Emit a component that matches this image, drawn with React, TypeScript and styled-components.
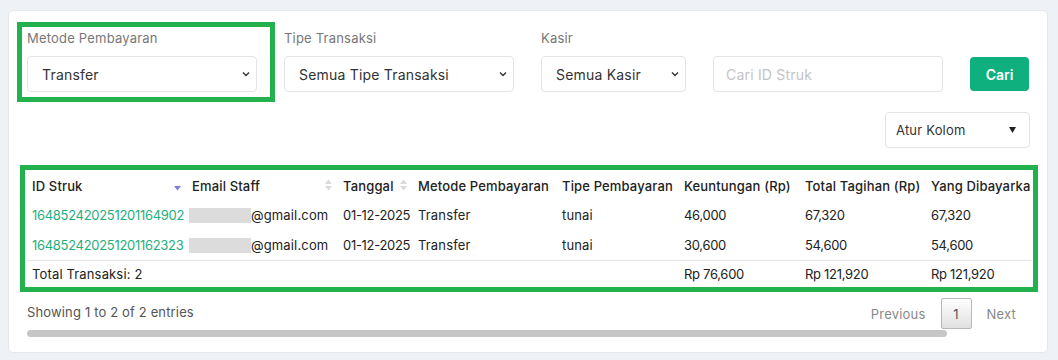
import React from "react";
import styled, { createGlobalStyle, css } from "styled-components";

const Global = createGlobalStyle`
  html, body { margin: 0; padding: 0; background: #eef1f5; }
  body { font-family: "Inter", "Noto Sans", sans-serif; color: #212529; }
  * { box-sizing: border-box; }
`;

const Page = styled.div`
  padding: 10px 10px 7px 8px;
  width: 1058px;
  height: 360px;
`;

const Card = styled.div`
  background: #fff;
  border: 1px solid #e4e7eb;
  border-radius: 5px;
  width: 1040px;
  height: 343px;
  padding: 17px 17px 0 18px;
  display: flex;
  flex-direction: column;
`;

const Highlight = css<{ $box?: [number, number, number, number] }>`
  position: relative;
  &::after {
    content: "";
    position: absolute;
    top: ${(p) => (p.$box ? p.$box[0] : 0)}px;
    right: ${(p) => (p.$box ? p.$box[1] : 0)}px;
    bottom: ${(p) => (p.$box ? p.$box[2] : 0)}px;
    left: ${(p) => (p.$box ? p.$box[3] : 0)}px;
    border: 5px solid #22b14c;
    pointer-events: none;
  }
`;

const FilterRow = styled.div`
  display: flex;
  align-items: flex-end;
  gap: 27px;
`;

const Field = styled.div<{ $w: number; $box?: [number, number, number, number] }>`
  width: ${(p) => p.$w}px;
  display: flex;
  flex-direction: column;
  ${(p) => (p.$box ? Highlight : "")}
`;

const Label = styled.div`
  font-size: 13px;
  line-height: 20px;
  color: #777;
  margin-bottom: 8px;
  letter-spacing: 0.2px;
`;

const SelectBox = styled.div`
  height: 36px;
  border: 1px solid #e2e4e8;
  border-radius: 4px;
  background: #fff;
  display: flex;
  align-items: center;
  justify-content: space-between;
  padding: 0 6px 0 14px;
  font-size: 14px;
  color: #333;
  letter-spacing: 0.2px;
`;

const SearchBox = styled.div`
  width: 230px;
  height: 36px;
  border: 1px solid #e2e4e8;
  border-radius: 4px;
  display: flex;
  align-items: center;
  padding: 0 12px;
  font-size: 14px;
  color: #c4c4c4;
  letter-spacing: 0.2px;
`;

const Button = styled.div`
  width: 59px;
  height: 34px;
  margin-bottom: 1px;
  border-radius: 4px;
  background: #0fb07e;
  color: #fff;
  font-size: 14px;
  font-weight: 600;
  display: flex;
  align-items: center;
  justify-content: center;
`;

const ToolRow = styled.div`
  display: flex;
  justify-content: flex-end;
  margin-top: 20px;
`;

const ColumnSelect = styled(SelectBox)`
  width: 145px;
  padding: 0 13px 0 10px;
  font-size: 13px;
`;

const TableWrap = styled.div<{ $box?: [number, number, number, number] }>`
  margin-top: 22px;
  width: 1004px;
  ${Highlight}
`;

const Scroller = styled.div`
  overflow: hidden;
  width: 1004px;
`;

const Table = styled.table`
  border-collapse: collapse;
  table-layout: fixed;
  width: 1080px;
  font-size: 13px;
  letter-spacing: 0.15px;
`;

const Th = styled.th<{ $w: number }>`
  position: relative;
  width: ${(p) => p.$w}px;
  text-align: left;
  font-weight: 500;
  height: 30px;
  padding: 2px 5px 0;
  white-space: nowrap;
  overflow: hidden;
  color: #222;
`;

const Td = styled.td<{ $link?: boolean; $num?: boolean }>`
  height: 30px;
  padding: 0 5px;
  white-space: nowrap;
  overflow: hidden;
  color: ${(p) => (p.$link ? "#1fae7e" : "#222")};
  letter-spacing: ${(p) => (p.$num ? "-0.3px" : "0.15px")};
`;

const TotalRow = styled.tr`
  border-top: 1px solid #e2e2e2;
  td { height: 28px; padding-top: 0; }
`;

const SortIcon = styled.span`
  position: absolute;
  right: 6px;
  top: 9px;
  display: flex;
`;

const Redacted = styled.span`
  display: inline-block;
  width: 62px;
  height: 15px;
  background: #dcdcdc;
  vertical-align: -3px;
  margin-left: -3px;
`;

const Footer = styled.div`
  margin-top: 10px;
  display: flex;
  align-items: center;
  justify-content: space-between;
  height: 31px;
`;

const Info = styled.div`
  font-size: 13px;
  color: #555;
  letter-spacing: 0.15px;
  margin-top: -4px;
`;

const Pager = styled.div`
  display: flex;
  align-items: center;
  gap: 15px;
  margin-right: 14px;
  font-size: 13px;
  color: #888;
  letter-spacing: 0.2px;
`;

const PageNum = styled.div`
  width: 31px;
  height: 31px;
  border: 1px solid #b9b9b9;
  border-radius: 2px;
  background: linear-gradient(#fff, #e0e0e0);
  color: #555;
  display: flex;
  align-items: center;
  justify-content: center;
`;

const ScrollThumb = styled.div`
  width: 920px;
  height: 7px;
  margin-top: 1px;
  border-radius: 4px;
  background: #c6c6c6;
`;

const Chevron = () => (
  <svg width="8" height="6" viewBox="0 0 8 6">
    <path d="M1 1.5 L4 4.5 L7 1.5" fill="none" stroke="#333" strokeWidth="1.4" />
  </svg>
);

const Caret = () => (
  <svg width="7" height="6" viewBox="0 0 7 6">
    <path d="M0 0 H7 L3.5 6 Z" fill="#222" />
  </svg>
);

const Sort = ({ active }: { active?: boolean }) => (
  <SortIcon>
    {active ? (
      <svg width="7" height="12" viewBox="0 0 7 12">
        <path d="M0 7 H7 L3.5 11.5 Z" fill="#7a80e0" />
      </svg>
    ) : (
      <svg width="7" height="12" viewBox="0 0 7 12">
        <path d="M0 5 H7 L3.5 0.5 Z" fill="#dadada" />
        <path d="M0 7 H7 L3.5 11.5 Z" fill="#dadada" />
      </svg>
    )}
  </SortIcon>
);

const cols: { t: string; w: number; sort?: "on" | "off" }[] = [
  { t: "ID Struk", w: 160, sort: "on" },
  { t: "Email Staff", w: 151, sort: "off" },
  { t: "Tanggal", w: 75, sort: "off" },
  { t: "Metode Pembayaran", w: 144 },
  { t: "Tipe Pembayaran", w: 122 },
  { t: "Keuntungan (Rp)", w: 121 },
  { t: "Total Tagihan (Rp)", w: 126 },
  { t: "Yang Dibayarkan (Rp)", w: 181 },
];

const rows = [
  ["164852420251201164902", "01-12-2025", "Transfer", "tunai", "46,000", "67,320", "67,320"],
  ["164852420251201162323", "01-12-2025", "Transfer", "tunai", "30,600", "54,600", "54,600"],
];

export default function App() {
  return (
    <>
      <Global />
      <Page>
        <Card>
          <FilterRow>
            <Field $w={230} $box={[-6, -18, -10, -10]}>
              <Label>Metode Pembayaran</Label>
              <SelectBox>
                Transfer <Chevron />
              </SelectBox>
            </Field>
            <Field $w={230}>
              <Label>Tipe Transaksi</Label>
              <SelectBox>
                Semua Tipe Transaksi <Chevron />
              </SelectBox>
            </Field>
            <Field $w={145}>
              <Label>Kasir</Label>
              <SelectBox>
                Semua Kasir <Chevron />
              </SelectBox>
            </Field>
            <SearchBox>Cari ID Struk</SearchBox>
            <Button>Cari</Button>
          </FilterRow>
          <ToolRow>
            <ColumnSelect>
              Atur Kolom <Caret />
            </ColumnSelect>
          </ToolRow>
          <TableWrap $box={[-5, -7, -4, -7]}>
            <Scroller>
              <Table>
                <thead>
                  <tr>
                    {cols.map((c) => (
                      <Th key={c.t} $w={c.w}>
                        {c.t}
                        {c.sort && <Sort active={c.sort === "on"} />}
                      </Th>
                    ))}
                  </tr>
                </thead>
                <tbody>
                  {rows.map((r) => (
                    <tr key={r[0]}>
                      <Td $link $num>{r[0]}</Td>
                      <Td>
                        <Redacted />@gmail.com
                      </Td>
                      <Td $num>{r[1]}</Td>
                      <Td>{r[2]}</Td>
                      <Td>{r[3]}</Td>
                      <Td $num>{r[4]}</Td>
                      <Td $num>{r[5]}</Td>
                      <Td $num>{r[6]}</Td>
                    </tr>
                  ))}
                  <TotalRow>
                    <Td>Total Transaksi: 2</Td>
                    <Td />
                    <Td />
                    <Td />
                    <Td />
                    <Td $num>Rp 76,600</Td>
                    <Td $num>Rp 121,920</Td>
                    <Td $num>Rp 121,920</Td>
                  </TotalRow>
                </tbody>
              </Table>
            </Scroller>
          </TableWrap>
          <Footer>
            <Info>Showing 1 to 2 of 2 entries</Info>
            <Pager>
              <span>Previous</span>
              <PageNum>1</PageNum>
              <span>Next</span>
            </Pager>
          </Footer>
          <ScrollThumb />
        </Card>
      </Page>
    </>
  );
}
